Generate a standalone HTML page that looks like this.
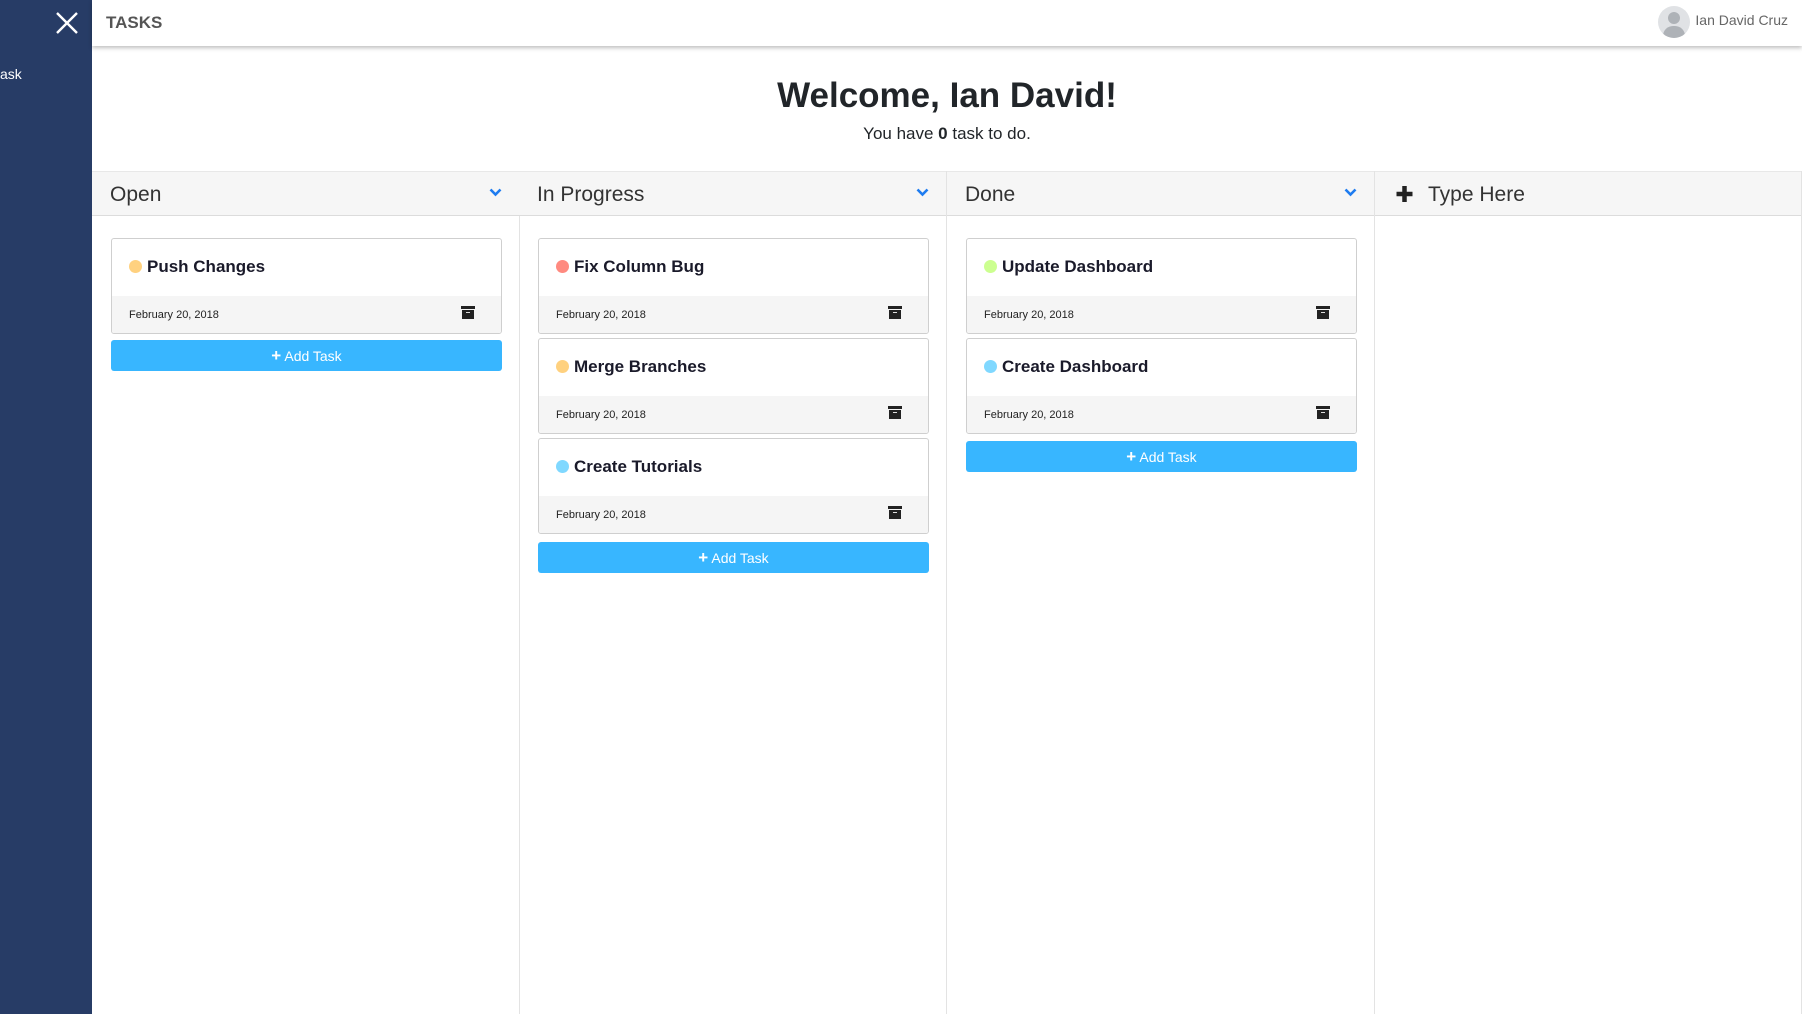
<!DOCTYPE html>
<html><head><meta charset="utf-8"><style>
*{box-sizing:border-box;margin:0;padding:0}
body{width:1802px;height:1014px;overflow:hidden;background:#fff;font-family:"Liberation Sans","DejaVu Sans",sans-serif;color:#212529;position:relative}
.side{position:absolute;left:0;top:0;width:92px;height:1014px;background:#273c66}
.side .ask{position:absolute;left:0;top:66px;color:#fff;font-size:14px}
.hdr{position:absolute;left:92px;top:0;right:0;height:46px;background:#fff;box-shadow:0 2px 4px rgba(0,0,0,.25);z-index:2}
.hdr .t{position:absolute;left:14px;top:13px;font-weight:bold;font-size:17px;color:#555}
.hdr .u{position:absolute;right:14px;top:12px;font-size:14px;color:#666}
.av{position:absolute;right:112px;top:6px;width:32px;height:32px;border-radius:50%;background:#e0e2e5;overflow:hidden}
.av:before{content:"";position:absolute;left:10px;top:6px;width:12px;height:12px;border-radius:50%;background:#aeb2b7}
.av:after{content:"";position:absolute;left:5px;top:20px;width:22px;height:16px;border-radius:10px 10px 0 0;background:#aeb2b7}
h1{position:absolute;left:92px;right:0;top:76px;text-align:center;font-size:35px;font-weight:bold}
.sub{position:absolute;left:92px;right:0;top:124px;text-align:center;font-size:17px}
.col{position:absolute;top:171px;width:428px;height:843px;border-right:1px solid #e3e3e3}
.ch{height:45px;background:#f6f6f6;border-top:1px solid #e8e8e8;border-bottom:1px solid #dcdcdc;position:relative}
.ch span{position:absolute;left:18px;top:11px;font-size:21px;color:#333}
.chev{position:absolute;right:17px;top:16px}
.card{position:absolute;left:19px;width:391px;height:96px;border:1px solid #cfcfcf;border-radius:3px;overflow:hidden;background:#fff}
.card .ti{height:57px;padding:18px 0 0 17px;font-size:17px;font-weight:bold;color:#1a1a2a}
.dot{display:inline-block;width:13px;height:13px;border-radius:50%;margin-right:5px;vertical-align:-1px}
.card .ft{height:38px;background:#f5f5f5;position:relative}
.card .ft span{position:absolute;left:17px;top:13px;font-size:11px;color:#222}
.arch{position:absolute;right:26px;top:10px;width:14px;height:13px}
.arch:before{content:"";position:absolute;left:0;top:0;width:14px;height:3px;background:#222}
.arch:after{content:"";position:absolute;left:1px;top:4px;width:12px;height:9px;background:#222}
.arch i{position:absolute;left:5px;top:6px;width:4px;height:1px;background:#ddd;z-index:1}
.btn{position:absolute;left:19px;width:391px;height:31px;background:#38b6ff;border-radius:3px;color:#fff;font-size:14px;text-align:center;line-height:32px}
.btn b{font-size:17px;font-weight:bold}
</style></head><body>
<div class="side"><svg style="position:absolute;left:56px;top:12px" width="22" height="22" viewBox="0 0 22 22"><path d="M1 1L21 21M21 1L1 21" stroke="#fff" stroke-width="2.4"/></svg><div class="ask">ask</div></div>
<div class="hdr"><div class="t">TASKS</div><div class="av"></div><div class="u">Ian David Cruz</div></div>
<h1>Welcome, Ian David!</h1>
<div class="sub">You have <b>0</b> task to do.</div>

<div class="col" style="left:92px"><div class="ch"><span>Open</span><svg class="chev" width="13" height="9" viewBox="0 0 13 9"><path d="M1.5 1.5L6.5 6.5L11.5 1.5" stroke="#1e7cf0" stroke-width="2.6" fill="none"/></svg></div>
<div class="card" style="top:67px"><div class="ti"><span class="dot" style="background:#ffd17f"></span>Push Changes</div><div class="ft"><span>February 20, 2018</span><div class="arch"><i></i></div></div></div>
<div class="btn" style="top:169px"><b>+</b> Add Task</div></div>

<div class="col" style="left:519px"><div class="ch"><span>In Progress</span><svg class="chev" width="13" height="9" viewBox="0 0 13 9"><path d="M1.5 1.5L6.5 6.5L11.5 1.5" stroke="#1e7cf0" stroke-width="2.6" fill="none"/></svg></div>
<div class="card" style="top:67px"><div class="ti"><span class="dot" style="background:#ff8a80"></span>Fix Column Bug</div><div class="ft"><span>February 20, 2018</span><div class="arch"><i></i></div></div></div>
<div class="card" style="top:167px"><div class="ti"><span class="dot" style="background:#ffd17f"></span>Merge Branches</div><div class="ft"><span>February 20, 2018</span><div class="arch"><i></i></div></div></div>
<div class="card" style="top:267px"><div class="ti"><span class="dot" style="background:#80d8ff"></span>Create Tutorials</div><div class="ft"><span>February 20, 2018</span><div class="arch"><i></i></div></div></div>
<div class="btn" style="top:371px"><b>+</b> Add Task</div></div>

<div class="col" style="left:947px"><div class="ch"><span>Done</span><svg class="chev" width="13" height="9" viewBox="0 0 13 9"><path d="M1.5 1.5L6.5 6.5L11.5 1.5" stroke="#1e7cf0" stroke-width="2.6" fill="none"/></svg></div>
<div class="card" style="top:67px"><div class="ti"><span class="dot" style="background:#ccff90"></span>Update Dashboard</div><div class="ft"><span>February 20, 2018</span><div class="arch"><i></i></div></div></div>
<div class="card" style="top:167px"><div class="ti"><span class="dot" style="background:#80d8ff"></span>Create Dashboard</div><div class="ft"><span>February 20, 2018</span><div class="arch"><i></i></div></div></div>
<div class="btn" style="top:270px"><b>+</b> Add Task</div></div>

<div class="col" style="left:1375px;width:427px"><div class="ch"><svg style="position:absolute;left:20px;top:13px" width="19" height="18" viewBox="0 0 19 18"><path d="M9.5 1V17M1.5 9H17.5" stroke="#222" stroke-width="4.5"/></svg><span style="left:53px">Type Here</span></div></div>
</body></html>
